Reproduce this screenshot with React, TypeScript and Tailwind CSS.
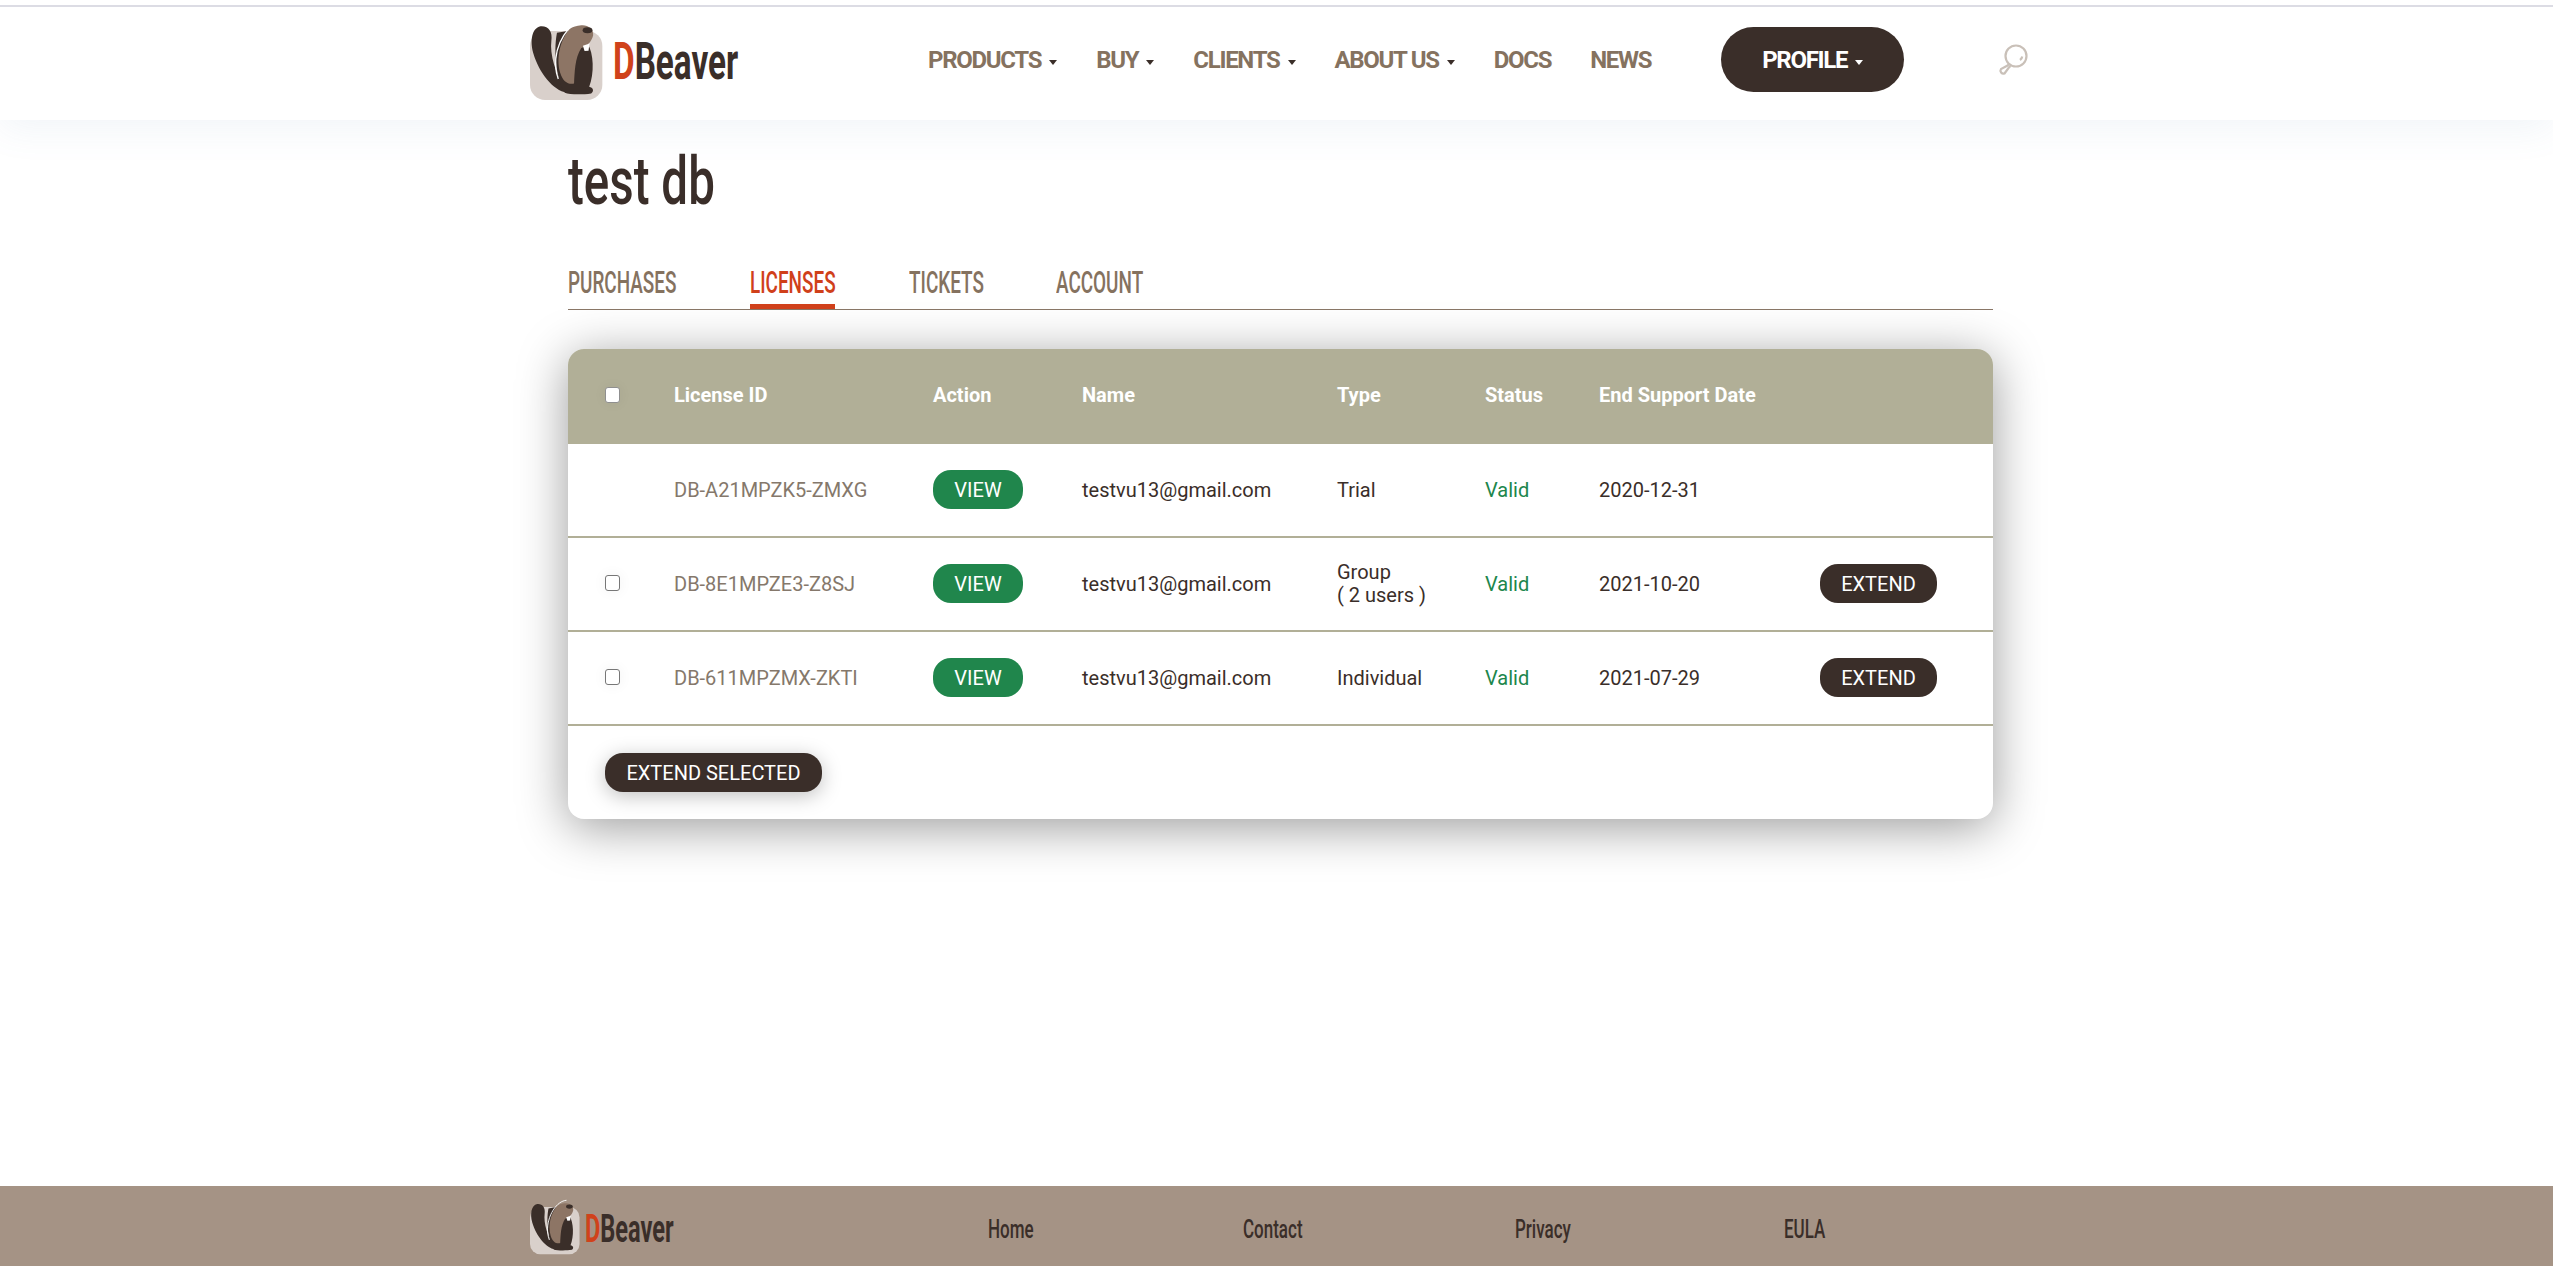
const brown = "#3a2e29";

function Beaver({ className }: { className: string }) {
  return (
    <svg viewBox="30 28 222 245" className={className}>
      <rect x="30" y="62" width="220" height="210" rx="46" fill="#d9d0cb" />
      <path d="M62 48C86 46 99 64 95 92C90 132 106 192 142 250C100 243 58 190 40 130C30 92 35 54 62 48Z" fill={brown} />
      <path d="M112 68L145 62L205 100C224 130 226 190 210 232C222 234 226 245 216 252C190 256 150 256 136 250C112 215 100 130 112 68Z" fill={brown} />
      <path d="M150 56C124 88 108 140 122 190C130 216 146 226 164 222C166 190 166 144 186 114C204 108 216 97 222 76C224 56 206 43 186 45C172 46 160 50 150 56Z" fill="#8d7565" />
      <ellipse cx="205" cy="60" rx="15" ry="9" fill={brown} />
      <path d="M191 107L211 100L208 122L196 123Z" fill="#fff" />
      <path d="M192 32C150 34 104 100 108 172C109 185 112 198 116 208" fill="none" stroke="#fff" strokeWidth="4" />
    </svg>
  );
}

function Logo({ small }: { small?: boolean }) {
  return (
    <div className={small ? "flex items-center w-[146px] h-[56px]" : "flex items-center w-[208px] h-[82px]"}>
      <Beaver className={small ? "w-[50px] h-[56px] shrink-0" : "w-[73px] h-[82px] shrink-0"} />
      <div
        className={
          small
            ? "ml-[5px] mt-[3px] origin-left scale-x-[0.62] text-[38px] leading-none font-bold whitespace-nowrap text-[#3a2e29]"
            : "ml-[10px] mt-[4px] origin-left scale-x-[0.64] text-[52px] leading-none font-bold whitespace-nowrap text-[#3a2e29]"
        }
      >
        <span className="text-[#d0421b]">D</span>Beaver
      </div>
    </div>
  );
}

function NavItem({ label, caret }: { label: string; caret?: boolean }) {
  return (
    <a className="flex items-center text-[24px] font-bold tracking-[-1.3px] text-[#85725f] whitespace-nowrap">
      {label}
      {caret && <span className="ml-[8px] mt-[6px] border-x-[4px] border-t-[5px] border-x-transparent border-t-[#3a2e29]" />}
    </a>
  );
}

function Checkbox({ header }: { header?: boolean }) {
  return (
    <input
      type="checkbox"
      className={
        header
          ? "appearance-none block -mt-[1px] w-[15px] h-[16px] rounded-[3px] bg-white border border-[#8f8f8f] shadow-[0_0_14px_rgba(0,0,0,0.05)]"
          : "appearance-none block -mt-[1px] w-[15px] h-[16px] rounded-[3px] bg-white border border-[#777] shadow-[0_0_14px_rgba(0,0,0,0.06)]"
      }
    />
  );
}

function Tab({ label, active, className }: { label: string; active?: boolean; className: string }) {
  return (
    <div className={className}>
      <span className={active ? "inline-block origin-left scale-x-[0.61] whitespace-nowrap text-[#d0401a]" : "inline-block origin-left scale-x-[0.61] whitespace-nowrap"}>
        {label}
      </span>
    </div>
  );
}

const licenses = [
  { id: "DB-A21MPZK5-ZMXG", type: "Trial", date: "2020-12-31", extend: false },
  { id: "DB-8E1MPZE3-Z8SJ", type: "Group", sub: "( 2 users )", date: "2021-10-20", extend: true },
  { id: "DB-611MPZMX-ZKTI", type: "Individual", date: "2021-07-29", extend: true },
];

const cols = "grid grid-cols-[106px_259px_149px_255px_148px_114px_221px_1fr] items-center";

export default function App() {
  return (
    <div className="min-h-[1266px] flex flex-col bg-white font-['Roboto',sans-serif] text-[#3a2e29]">
      <header className="relative bg-white pt-[5px] shadow-[0_8px_36px_rgba(90,130,180,0.09)]">
        <div className="h-[2px] bg-[#dcdce4]" />
        <div className="flex items-center h-[113px] pb-2 pl-[530px]">
          <Logo />
          <nav className="flex items-center gap-[39px] ml-[190px]">
            <NavItem label="PRODUCTS" caret />
            <NavItem label="BUY" caret />
            <NavItem label="CLIENTS" caret />
            <NavItem label="ABOUT US" caret />
            <NavItem label="DOCS" />
            <NavItem label="NEWS" />
          </nav>
          <button className="ml-[70px] flex items-center justify-center w-[183px] h-[65px] rounded-full bg-[#3a2e29] text-white text-[24px] font-bold tracking-[-1.3px]">
            PROFILE
            <span className="ml-[8px] mt-[6px] border-x-[4px] border-t-[5px] border-x-transparent border-t-white" />
          </button>
          <svg viewBox="0 0 34 34" className="ml-[92px] w-[34px] h-[34px]" fill="none" stroke="#c9c0b8" strokeWidth="2.2">
            <circle cx="20" cy="13" r="10.5" />
            <path d="M24 17C25.5 16 26 15 26.2 13.5" />
            <path d="M13 21L11.5 22.5L5 26A3 3 0 0 0 8.5 30.5L12.5 25L14.5 23" />
          </svg>
        </div>
      </header>

      <main className="w-[1425px] ml-[568px]">
        <h1 className="mt-[24px] text-[66px] leading-[76px] font-medium origin-left scale-x-[0.72] whitespace-nowrap text-[#3a2e29]">test db</h1>
        <div className="mt-[39px] h-[51px] flex border-b border-[#8a7767] text-[31px] leading-[47px] font-medium text-[#85725f]">
          <Tab label="PURCHASES" className="w-[182px]" />
          <Tab label="LICENSES" active className="w-[85px] h-[50px] mr-[74px] border-b-[5px] border-[#d0401a]" />
          <Tab label="TICKETS" className="w-[147px]" />
          <Tab label="ACCOUNT" className="w-[100px]" />
        </div>

        <section className="mt-[39px] h-[470px] rounded-[16px] bg-white shadow-[0_8px_50px_rgba(0,0,0,0.4)] overflow-hidden">
          <div className={`${cols} h-[94.5px] pb-[2px] bg-[#b1af97] text-white text-[20px] font-bold`}>
            <div className="pl-[37px]">
              <Checkbox header />
            </div>
            <div>License ID</div>
            <div>Action</div>
            <div>Name</div>
            <div>Type</div>
            <div>Status</div>
            <div>End Support Date</div>
          </div>
          {licenses.map((l) => (
            <div key={l.id} className={`${cols} h-[94px] border-b-2 border-[#b1af97] text-[20px]`}>
              <div className="pl-[37px]">{l.extend && <Checkbox />}</div>
              <div className="text-[#85786b]">{l.id}</div>
              <div>
                <button className="w-[90px] h-[39px] rounded-[18px] bg-[#20864c] text-white">VIEW</button>
              </div>
              <div>testvu13@gmail.com</div>
              <div className="leading-[23px] pt-[1px]">
                {l.type}
                {l.sub && <div>{l.sub}</div>}
              </div>
              <div className="text-[#20864c]">Valid</div>
              <div>{l.date}</div>
              <div>
                {l.extend && <button className="w-[117px] h-[39px] rounded-[18px] bg-[#3a2e29] text-white">EXTEND</button>}
              </div>
            </div>
          ))}
          <div className="flex items-center h-[94px] pl-[37px]">
            <button className="w-[217px] h-[39px] rounded-[18px] bg-[#3a2e29] text-white text-[20px] shadow-[0_4px_20px_rgba(0,0,0,0.25)]">
              EXTEND SELECTED
            </button>
          </div>
        </section>
      </main>

      <footer className="mt-auto flex items-center h-[80px] pt-[2px] pl-[530px] bg-[#a59385]">
        <Logo small />
        <nav className="mt-[6px] flex text-[25px] font-medium text-[#3a2e29]">
          <a className="ml-[312px] w-[255px]"><span className="inline-block origin-left scale-x-[0.68]">Home</span></a>
          <a className="w-[272px]"><span className="inline-block origin-left scale-x-[0.68]">Contact</span></a>
          <a className="w-[269px]"><span className="inline-block origin-left scale-x-[0.68]">Privacy</span></a>
          <a><span className="inline-block origin-left scale-x-[0.68]">EULA</span></a>
        </nav>
      </footer>
    </div>
  );
}
